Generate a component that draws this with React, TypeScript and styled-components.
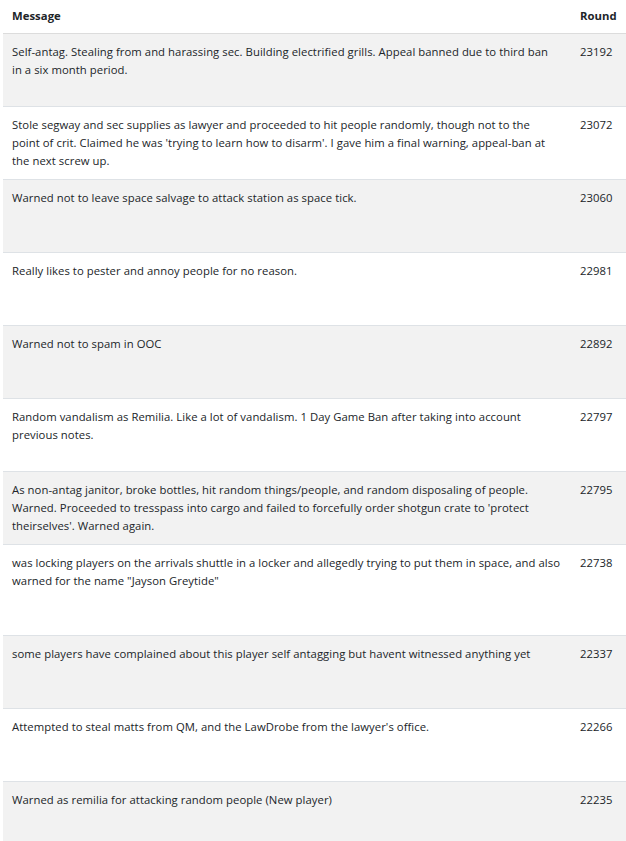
import React from "react";
import styled, { createGlobalStyle } from "styled-components";

const GlobalStyle = createGlobalStyle`
  html, body { margin: 0; padding: 0; background: #ffffff; }
  body { font-family: "Open Sans", "Lato", sans-serif; color: #212529; }
`;

const Page = styled.div`
  padding-left: 3px;
  width: 623px;
  overflow: hidden;
`;

const Table = styled.div`
  display: grid;
  grid-template-columns: 566px 1fr;
  width: 100%;
  font-size: 11.3px;
  letter-spacing: 0.05px;
  line-height: 18px;
`;

const HeaderCell = styled.div<{ $indent?: number }>`
  font-weight: 700;
  padding: 7px 9px 7px ${(p) => 9 + (p.$indent ?? 0)}px;
  height: 34px;
  box-sizing: border-box;
  border-bottom: 1px solid #dcdcdc;
`;

const Cell = styled.div<{ $odd: boolean; $minH: number; $indent?: number }>`
  background: ${(p) => (p.$odd ? "#f2f2f2" : "#ffffff")};
  padding: 9px 9px 9px ${(p) => 9 + (p.$indent ?? 0)}px;
  min-height: ${(p) => p.$minH}px;
  box-sizing: border-box;
  border-bottom: 1px solid #dee2e6;
`;

type Note = { message: string; round: string; tall?: boolean };

const notes: Note[] = [
  { message: "Self-antag. Stealing from and harassing sec. Building electrified grills. Appeal banned due to third ban in a six month period.", round: "23192" },
  { message: "Stole segway and sec supplies as lawyer and proceeded to hit people randomly, though not to the point of crit. Claimed he was 'trying to learn how to disarm'. I gave him a final warning, appeal-ban at the next screw up.", round: "23072" },
  { message: "Warned not to leave space salvage to attack station as space tick.", round: "23060" },
  { message: "Really likes to pester and annoy people for no reason.", round: "22981" },
  { message: "Warned not to spam in OOC", round: "22892" },
  { message: "Random vandalism as Remilia. Like a lot of vandalism. 1 Day Game Ban after taking into account previous notes.", round: "22797" },
  { message: "As non-antag janitor, broke bottles, hit random things/people, and random disposaling of people. Warned. Proceeded to tresspass into cargo and failed to forcefully order shotgun crate to 'protect theirselves'. Warned again.", round: "22795" },
  { message: "was locking players on the arrivals shuttle in a locker and allegedly trying to put them in space, and also warned for the name \"Jayson Greytide\"", round: "22738", tall: true },
  { message: "some players have complained about this player self antagging but havent witnessed anything yet", round: "22337" },
  { message: "Attempted to steal matts from QM, and the LawDrobe from the lawyer's office.", round: "22266" },
  { message: "Warned as remilia for attacking random people (New player)", round: "22235" },
];

export default function App() {
  return (
    <>
      <GlobalStyle />
      <Page>
        <Table>
          <HeaderCell>Message</HeaderCell>
          <HeaderCell $indent={2}>Round</HeaderCell>
          {notes.map((n, i) => {
            const odd = i % 2 === 0;
            const h = n.tall ? 91 : 73;
            return (
              <React.Fragment key={n.round}>
                <Cell $odd={odd} $minH={h}>{n.message}</Cell>
                <Cell $odd={odd} $minH={h} $indent={2}>{n.round}</Cell>
              </React.Fragment>
            );
          })}
        </Table>
      </Page>
    </>
  );
}
